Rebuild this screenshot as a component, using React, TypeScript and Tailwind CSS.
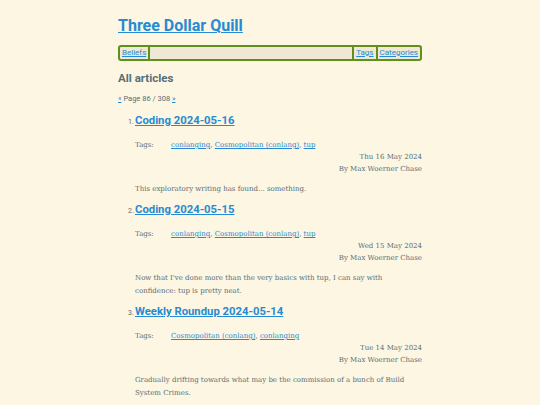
import React from "react";

const heading = { fontFamily: 'Roboto, "Open Sans", sans-serif' };

type Article = {
  n: number;
  title: string;
  tags: string[];
  date: string;
  summary: string;
};

const articles: Article[] = [
  {
    n: 1,
    title: "Coding 2024-05-16",
    tags: ["conlanging", "Cosmopolitan (conlang)", "tup"],
    date: "Thu 16 May 2024",
    summary: "This exploratory writing has found... something.",
  },
  {
    n: 2,
    title: "Coding 2024-05-15",
    tags: ["conlanging", "Cosmopolitan (conlang)", "tup"],
    date: "Wed 15 May 2024",
    summary:
      "Now that I've done more than the very basics with tup, I can say with confidence: tup is pretty neat.",
  },
  {
    n: 3,
    title: "Weekly Roundup 2024-05-14",
    tags: ["Cosmopolitan (conlang)", "conlanging"],
    date: "Tue 14 May 2024",
    summary:
      "Gradually drifting towards what may be the commission of a bunch of Build System Crimes.",
  },
];

export default function App() {
  return (
    <div
      className="min-h-screen bg-[#fdf6e3] text-[#586e75]"
      style={{ fontFamily: '"DejaVu Serif", serif' }}
    >
      <div className="w-[304px] mx-auto pt-[15px]">
        <h1 className="text-[16px] leading-[22px] font-bold" style={heading}>
          <a href="#" className="text-[#268bd2] underline">
            Three Dollar Quill
          </a>
        </h1>
        <nav
          className="mt-[8px] flex h-[16px] items-stretch rounded-[3px] border-2 border-[#5f8f1c] bg-[#eee8d5] text-[8px] leading-[12px]"
          style={heading}
        >
          <a href="#" className="px-[2px] text-[#268bd2] underline border-r-2 border-[#5f8f1c]">
            Beliefs
          </a>
          <div className="flex-1" />
          <a href="#" className="px-[2px] text-[#268bd2] underline border-l-2 border-[#5f8f1c]">
            Tags
          </a>
          <a href="#" className="px-[2px] text-[#268bd2] underline border-l-2 border-[#5f8f1c]">
            Categories
          </a>
        </nav>
        <h2 className="mt-[9px] text-[11.5px] leading-[16px] font-bold text-[#586e75]" style={heading}>
          All articles
        </h2>
        <div className="mt-[8px] text-[7.5px] leading-[10px]" style={heading}>
          <a href="#" className="text-[#268bd2] underline">«</a> Page 86 / 308{" "}
          <a href="#" className="text-[#268bd2] underline">»</a>
        </div>
        <ol className="mt-[8px] pl-[17px]">
          {articles.map((a) => (
            <li key={a.n} className="mb-[5px]">
              <div className="flex items-baseline">
                <span className="w-[7px] -ml-[7px] text-[7px]" style={heading}>
                  {a.n}.
                </span>
                <h3 className="text-[11.3px] leading-[18px] font-bold" style={heading}>
                  <a href="#" className="text-[#268bd2] underline">
                    {a.title}
                  </a>
                </h3>
              </div>
              <div className="mt-[9px] flex text-[7px] leading-[12px]">
                <span className="w-[36px]">Tags:</span>
                <span>
                  {a.tags.map((t, i) => (
                    <React.Fragment key={t}>
                      <a href="#" className="text-[#268bd2] underline">
                        {t}
                      </a>
                      {i < a.tags.length - 1 ? ", " : ""}
                    </React.Fragment>
                  ))}
                </span>
              </div>
              <div className="text-right text-[7px] leading-[12px]">
                <div>{a.date}</div>
                <div>By Max Woerner Chase</div>
              </div>
              <p className="mt-[8px] text-[7px] leading-[13px]">{a.summary}</p>
            </li>
          ))}
        </ol>
      </div>
    </div>
  );
}
